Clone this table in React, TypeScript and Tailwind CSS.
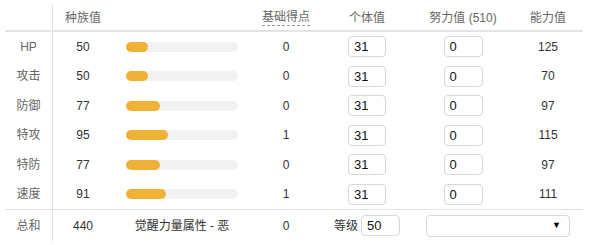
const stats = [
  { name: "HP", base: 50, pt: 0, iv: 31, ev: 0, total: 125 },
  { name: "攻击", base: 50, pt: 0, iv: 31, ev: 0, total: 70 },
  { name: "防御", base: 77, pt: 0, iv: 31, ev: 0, total: 97 },
  { name: "特攻", base: 95, pt: 1, iv: 31, ev: 0, total: 115 },
  { name: "特防", base: 77, pt: 0, iv: 31, ev: 0, total: 97 },
  { name: "速度", base: 91, pt: 1, iv: 31, ev: 0, total: 111 },
]

const cols = "grid grid-cols-[48px_60px_138px_70px_92px_100px_70px] items-center"
const font = { fontFamily: '"Liberation Sans", "Noto Sans CJK SC", sans-serif' }

function Box({ value, w }: { value: number; w: string }) {
  return (
    <div className={`${w} h-[21px] border border-[#d3d8df] rounded-[4px] bg-white pl-[5px] text-[13px] leading-[19px] text-[#111]`}>
      {value}
    </div>
  )
}

export default function App() {
  return (
    <div className="w-[600px] h-[245px] bg-white pl-[5px] pt-[5px] text-[12px]" style={font}>
      <div className="w-[578px]">
        {/* header */}
        <div className={`${cols} h-[27px] border-b-2 border-[#e1e4e8] text-[#666]`}>
          <div className="h-full border-r border-[#dde0e5]"></div>
          <div className="text-center">种族值</div>
          <div></div>
          <div className="flex justify-center">
            <span className="border-b border-dashed border-[#999] leading-[15px]">基础得点</span>
          </div>
          <div className="text-center">个体值</div>
          <div className="text-center">努力值 (510)</div>
          <div className="text-center">能力值</div>
        </div>

        {stats.map((s) => (
          <div key={s.name} className={`${cols} h-[29.5px]`}>
            <div className="h-full flex items-center justify-center border-r border-[#dde0e5] text-[#666]">{s.name}</div>
            <div className="text-center text-[#333]">{s.base}</div>
            <div className="flex justify-center">
              <div className="w-[112px] h-[10px] rounded-full bg-[#f2f2f2]">
                <div className="h-full rounded-full bg-[#efb136]" style={{ width: `${(s.base / 255) * 112}px` }}></div>
              </div>
            </div>
            <div className="text-center text-[#333]">{s.pt}</div>
            <div className="flex justify-center"><Box value={s.iv} w="w-[38px]" /></div>
            <div className="flex justify-center"><Box value={s.ev} w="w-[39px]" /></div>
            <div className="text-center text-[#333]">{s.total}</div>
          </div>
        ))}

        {/* total */}
        <div className={`${cols} h-[32px] border-t border-[#dde0e5]`}>
          <div className="h-full flex items-center justify-center border-r border-[#dde0e5] text-[#666]">总和</div>
          <div className="text-center text-[#333]">440</div>
          <div className="text-center text-[#333]">觉醒力量属性 - 恶</div>
          <div className="text-center text-[#333]">0</div>
          <div className="flex justify-center items-center gap-[3px]">
            <span className="text-[#333]">等级</span>
            <Box value={50} w="w-[39px]" />
          </div>
          <div className="col-span-2 flex justify-center">
            <div className="w-[144px] h-[22px] border border-[#d3d8df] rounded-[4px] bg-white flex items-center justify-end pr-[8px] text-[9px] text-black">
              ▼
            </div>
          </div>
        </div>
      </div>
    </div>
  )
}
